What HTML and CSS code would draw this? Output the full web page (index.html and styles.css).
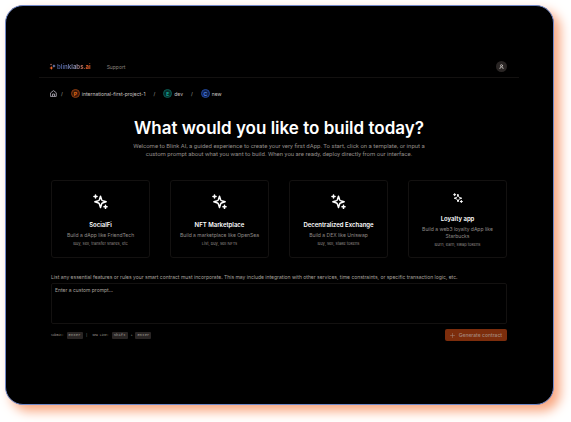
FILE: index.html
```html
<!DOCTYPE html>
<html lang="en">
<head>
    <meta charset="UTF-8">
    <meta name="viewport" content="width=device-width, initial-scale=1.0">
    <title>blinklabs.ai</title>
    <link rel="stylesheet" href="styles.css">
</head>
<body>
    <svg class="sprite" aria-hidden="true">
        <symbol id="sparkles" viewBox="0 0 24 24">
            <path d="M12 3.5 L13.8 9.2 Q14.2 10.2 15.2 10.6 L21 12.5 L15.2 14.5 Q14.2 14.9 13.8 15.9 L12 21.5 L10.2 15.9 Q9.8 14.9 8.8 14.5 L3 12.5 L8.8 10.6 Q9.8 10.2 10.2 9.2Z M4 1.5v5 M1.5 4h5 M20 18v5 M17.5 20.5h5"/>
        </symbol>
    </svg>
    <div class="window">
        <header class="navbar">
            <a href="#" class="logo">
                <svg viewBox="0 0 12 12" aria-hidden="true">
                    <path fill="#ff6a2b" d="M4 5 L5 7.5 L7.5 8.5 L5 9.5 L4 12 L3 9.5 L0.5 8.5 L3 7.5Z"/>
                    <path fill="#8ea2e6" d="M8.5 2 L9.3 4.2 L11.5 5 L9.3 5.8 L8.5 8 L7.7 5.8 L5.5 5 L7.7 4.2Z"/>
                    <circle fill="#b56f68" cx="3.5" cy="2.5" r="1.2"/>
                </svg>
                <span>blinklabs.ai</span>
            </a>
            <a href="#" class="nav-link">Support</a>
            <button type="button" class="avatar" aria-label="Account">
                <svg viewBox="0 0 12 12" aria-hidden="true">
                    <circle cx="6" cy="4" r="2.5"/>
                    <path d="M2 11 Q2 7 6 7 Q10 7 10 11"/>
                </svg>
            </button>
        </header>

        <main class="content">
            <nav class="breadcrumb" aria-label="Breadcrumb">
                <a href="#" class="home" aria-label="Home">
                    <svg viewBox="0 0 14 14" aria-hidden="true">
                        <path d="M1.5 5.5 L7 1.2 L12.5 5.5 V12.8 H1.5Z M5 12.5 V8 H9 V12.5"/>
                    </svg>
                </a>
                <span class="slash">/</span>
                <a href="#" class="crumb"><span class="badge orange">P</span>international-first-project-1</a>
                <span class="slash">/</span>
                <a href="#" class="crumb"><span class="badge green">E</span>dev</a>
                <span class="slash">/</span>
                <a href="#" class="crumb"><span class="badge blue">C</span>new</a>
            </nav>

            <h1>What would you like to build today?</h1>
            <p class="intro">Welcome to Blink AI, a guided experience to create your very first dApp. To start, click on a template, or input a custom prompt about what you want to build. When you are ready, deploy directly from our interface.</p>

            <div class="cards">
                <button type="button" class="card">
                    <svg class="icon" aria-hidden="true"><use href="#sparkles"/></svg>
                    <strong>SocialFi</strong>
                    <span class="desc">Build a dApp like FriendTech</span>
                    <small>Buy, sell, transfer shares, etc</small>
                </button>
                <button type="button" class="card">
                    <svg class="icon" aria-hidden="true"><use href="#sparkles"/></svg>
                    <strong>NFT Marketplace</strong>
                    <span class="desc">Build a marketplace like OpenSea</span>
                    <small>List, buy, sell NFTs</small>
                </button>
                <button type="button" class="card">
                    <svg class="icon" aria-hidden="true"><use href="#sparkles"/></svg>
                    <strong>Decentralized Exchange</strong>
                    <span class="desc">Build a DEX like Uniswap</span>
                    <small>Buy, sell, stake tokens</small>
                </button>
                <button type="button" class="card compact">
                    <svg class="icon" aria-hidden="true"><use href="#sparkles"/></svg>
                    <strong>Loyalty app</strong>
                    <span class="desc">Build a web3 loyalty dApp like Starbucks</span>
                    <small>Burn, earn, swap tokens</small>
                </button>
            </div>

            <form class="prompt-form">
                <label for="prompt">List any essential features or rules your smart contract must incorporate. This may include integration with other services, time constraints, or specific transaction logic, etc.</label>
                <textarea id="prompt" placeholder="Enter a custom prompt..."></textarea>
                <div class="form-footer">
                    <div class="shortcuts">
                        <span>Submit:</span><kbd>Enter</kbd>
                        <span class="divider">|</span>
                        <span>New Line:</span><kbd>Shift</kbd><span>+</span><kbd>Enter</kbd>
                    </div>
                    <button type="submit" class="generate">
                        <svg viewBox="0 0 10 10" aria-hidden="true"><path d="M5 1v8 M1 5h8"/></svg>
                        Generate contract
                    </button>
                </div>
            </form>
        </main>
    </div>
</body>
</html>
```

FILE: styles.css
```css
* {
    box-sizing: border-box;
}
body {
    margin: 0;
    padding: 5px 17px 17px 5px;
    min-height: 100vh;
    display: flex;
    background-color: #ffffff;
    font-family: Inter, "Liberation Sans", sans-serif;
    font-size: 5px;
    color: #a8a29e;
}
a {
    color: inherit;
    text-decoration: none;
}
button {
    font-family: inherit;
    cursor: pointer;
}
svg {
    flex-shrink: 0;
    fill: none;
    stroke-linecap: round;
    stroke-linejoin: round;
}
.sprite {
    position: absolute;
    width: 0;
    height: 0;
}
.window {
    flex: 1;
    padding: 50px 34px 20px 33px;
    background-color: #000000;
    border: 1px solid #7088c8;
    border-radius: 18px;
    box-shadow: 6px 6px 12px #f9a47c;
}

/* Top bar */
.navbar {
    display: flex;
    align-items: center;
    height: 22px;
    padding: 0 12px 0 10px;
    border-bottom: 1px solid #131110;
}
.logo {
    display: flex;
    align-items: center;
    gap: 1px;
    font-size: 6px;
    font-weight: 700;
}
.logo svg {
    width: 7px;
    height: 7px;
}
.logo span {
    background: linear-gradient(90deg, #4c5d94 20%, #8a8cab 55%, #e8622c 85%);
    background-clip: text;
    -webkit-background-clip: text;
    color: transparent;
}
.nav-link {
    margin-left: 16px;
    color: #87817e;
}
.avatar {
    display: flex;
    align-items: center;
    justify-content: center;
    width: 11px;
    height: 11px;
    margin-left: auto;
    padding: 0;
    border: none;
    border-radius: 50%;
    background-color: #292524;
}
.avatar svg {
    width: 5px;
    height: 5px;
    stroke: #c9c4c1;
    stroke-width: 2;
}

/* Breadcrumb */
.content {
    padding: 0 12px;
}
.breadcrumb {
    display: flex;
    align-items: center;
    gap: 8px;
    height: 9px;
    margin-top: 11px;
}
.home {
    display: flex;
    margin: 0 -4px 0 -1px;
}
.home svg {
    width: 7px;
    height: 7px;
    stroke: #96929c;
    stroke-width: 2;
}
.crumb {
    display: flex;
    align-items: center;
    gap: 2px;
    color: #c9c4c1;
}
.badge {
    display: flex;
    align-items: center;
    justify-content: center;
    width: 9px;
    height: 9px;
    border: 1px solid;
    border-radius: 50%;
    font-weight: 600;
}
.orange {
    color: #f97316;
    background-color: #3f1a08;
    border-color: #8a3a10;
}
.green {
    color: #14b8a6;
    background-color: #052e2a;
    border-color: #0b5a51;
}
.blue {
    color: #5b93ff;
    background-color: #0f2250;
    border-color: #22479a;
}

/* Heading */
h1 {
    margin: 20px 0 0;
    font-size: 17px;
    line-height: 20px;
    font-weight: 600;
    text-align: center;
    color: #ffffff;
}
.intro {
    max-width: 300px;
    margin: 4px auto 0;
    font-family: Roboto, "Liberation Sans", sans-serif;
    font-size: 6px;
    line-height: 8px;
    text-align: center;
    color: #918b88;
}

/* Templates */
.cards {
    display: grid;
    grid-template-columns: repeat(4, 1fr);
    gap: 20px;
    margin-top: 22px;
}
.card {
    display: flex;
    flex-direction: column;
    align-items: center;
    justify-content: center;
    min-height: 78px;
    padding: 6px 8px 4px;
    background-color: #000000;
    border: 1px solid #131110;
    border-radius: 3px;
    font-size: 5px;
    color: #918b88;
}
.icon {
    width: 15px;
    height: 15px;
    margin-bottom: 12px;
    stroke: #ffffff;
    stroke-width: 2.4;
}
.card strong {
    font-size: 6px;
    line-height: 8px;
    font-weight: 600;
    color: #ffffff;
}
.desc {
    margin-top: 3px;
    line-height: 7px;
}
.card small {
    margin-top: 2px;
    font-size: 4px;
    line-height: 6px;
}
.compact .icon {
    width: 10px;
    height: 10px;
}

/* Prompt */
.prompt-form {
    display: flex;
    flex-direction: column;
    margin-top: 16px;
}
.prompt-form label {
    line-height: 6px;
}
textarea {
    height: 41px;
    margin-top: 3px;
    padding: 3px;
    background-color: #000000;
    border: 1px solid #131110;
    border-radius: 2px;
    resize: none;
    font-family: inherit;
    font-size: 5px;
    line-height: 6px;
    color: #ffffff;
}
textarea::placeholder {
    color: #a8a29e;
}
.form-footer {
    display: flex;
    align-items: center;
    justify-content: space-between;
    margin-top: 5px;
}
.shortcuts {
    display: flex;
    align-items: center;
    gap: 3px;
    font-family: "Liberation Mono", monospace;
    font-size: 3px;
    color: #a8a29e;
}
.divider {
    margin-right: 2px;
}
kbd {
    padding: 0 2px;
    border-radius: 1px;
    background-color: #292524;
    font-family: inherit;
    font-size: 4px;
    line-height: 7px;
    color: #a8a29e;
}
.generate {
    display: flex;
    align-items: center;
    justify-content: center;
    gap: 4px;
    height: 12px;
    padding: 0 5px;
    border: none;
    border-radius: 2px;
    background-color: #7c2d0c;
    font-size: 5px;
    font-weight: 500;
    color: #a58a7e;
}
.generate svg {
    width: 5px;
    height: 5px;
    stroke: currentColor;
    stroke-width: 1;
}
```
